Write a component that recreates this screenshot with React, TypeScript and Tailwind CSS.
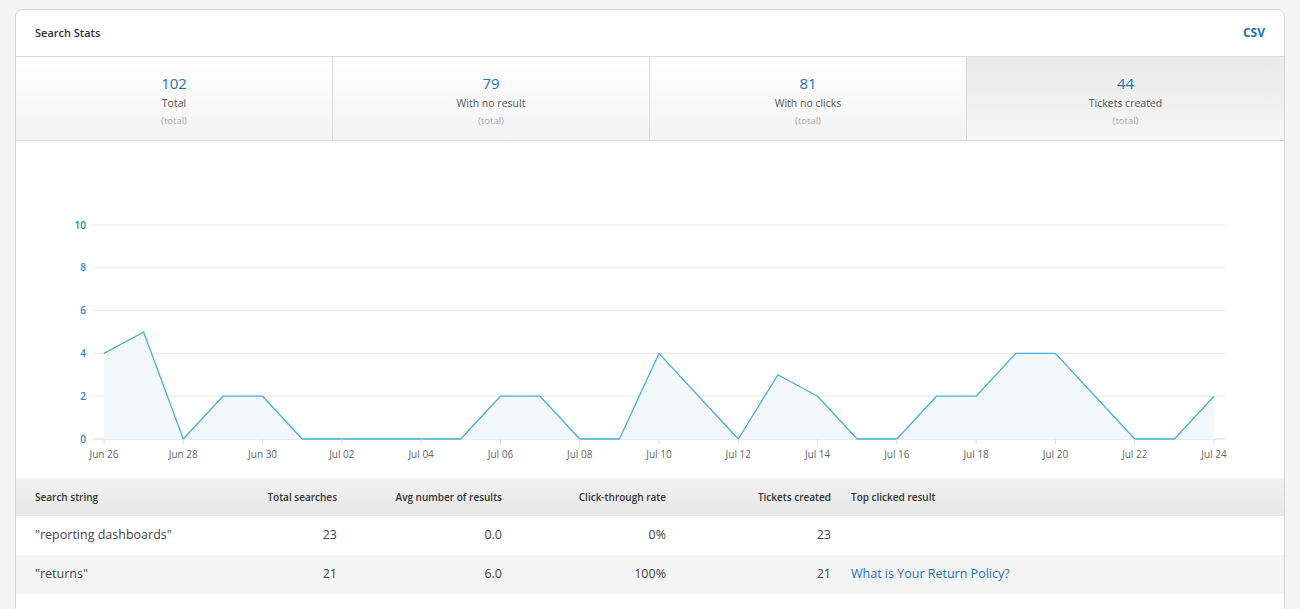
import React from 'react';

const STATS = [
  { value: '102', label: 'Total' },
  { value: '79', label: 'With no result' },
  { value: '81', label: 'With no clicks' },
  { value: '44', label: 'Tickets created', active: true },
];

// tickets per day, Jun 26 .. Jul 24
const DATA = [4, 5, 0, 2, 2, 0, 0, 0, 0, 0, 2, 2, 0, 0, 4, 2, 0, 3, 2, 0, 0, 2, 2, 4, 4, 2, 0, 0, 2];
const X_LABELS = ['Jun 26', 'Jun 28', 'Jun 30', 'Jul 02', 'Jul 04', 'Jul 06', 'Jul 08', 'Jul 10', 'Jul 12', 'Jul 14', 'Jul 16', 'Jul 18', 'Jul 20', 'Jul 22', 'Jul 24'];

const ROWS = [
  { q: '"reporting dashboards"', total: '23', avg: '0.0', ctr: '0%', tickets: '23', top: '' },
  { q: '"returns"', total: '21', avg: '6.0', ctr: '100%', tickets: '21', top: 'What is Your Return Policy?' },
];

const X0 = 104;
const X1 = 1214;
const Y0 = 439;
const UNIT = 21.4;
const px = (i: number) => X0 + ((X1 - X0) / (DATA.length - 1)) * i;
const py = (v: number) => Y0 - v * UNIT;

const Chart: React.FC = () => {
  const line = DATA.map((v, i) => `${i === 0 ? 'M' : 'L'}${px(i).toFixed(1)},${py(v).toFixed(1)}`).join(' ');
  const area = `${line} L${X1},${Y0} L${X0},${Y0} Z`;
  return (
    <svg viewBox="16 141 1268 337" className="block w-full h-[337px]" style={{ fontFamily: '"Open Sans", sans-serif' }}>
      {[0, 2, 4, 6, 8, 10].map((t) => (
        <g key={t}>
          <line x1={94} x2={1225} y1={py(t)} y2={py(t)} stroke={t === 0 ? '#e2e4e6' : '#e6e6e6'} strokeWidth={t === 0 ? 1.5 : 1} />
          <text x={86} y={py(t) + 3.5} textAnchor="end" fontSize={10} fill="#2b86c5" fontWeight={600}>{t}</text>
        </g>
      ))}
      <path d={area} fill="#f3f8fd" />
      <path d={line} fill="none" stroke="#4aaee3" strokeWidth={1.3} strokeLinejoin="round" />
      {X_LABELS.map((l, k) => (
        <g key={l}>
          <line x1={px(k * 2)} x2={px(k * 2)} y1={Y0} y2={Y0 + 5} stroke="#dcdcdc" />
          <text x={px(k * 2)} y={458} textAnchor="middle" fontSize={10} fill="#666">{l}</text>
        </g>
      ))}
    </svg>
  );
};

const COLS = 'grid grid-cols-[156px_165px_165px_164px_165px_1fr]';

export default function App() {
  return (
    <div className="min-h-[609px] bg-[#f4f4f4] pt-[9px] px-[15px] overflow-hidden" style={{ fontFamily: '"Open Sans", "Liberation Sans", sans-serif' }}>
      <div className="bg-white border border-[#d6d6d6] rounded-t-[8px] w-[1270px]">
        <div className="h-[47px] flex items-center justify-between px-[19px] border-b border-[#dcdcdc]">
          <span className="text-[11px] font-semibold text-[#333]">Search Stats</span>
          <span className="text-[12px] font-bold text-[#1f73b7]">CSV</span>
        </div>
        <div className="grid grid-cols-4 border-b border-[#dcdcdc]">
          {STATS.map((s, i) => (
            <div
              key={s.label}
              className={`h-[83px] flex flex-col items-center pt-[16px] ${i < 3 ? 'border-r border-[#dcdcdc]' : ''} ${s.active ? 'bg-gradient-to-b from-[#e9e9e9] to-[#f6f6f6]' : 'bg-gradient-to-b from-white to-[#f3f3f3]'}`}
            >
              <span className="text-[15px] leading-[20px] text-[#1f73b7]">{s.value}</span>
              <span className="text-[10.5px] leading-[16px] mt-[2px] text-[#555]">{s.label}</span>
              <span className="text-[9.5px] leading-[14px] mt-[3px] text-[#aaa]">(total)</span>
            </div>
          ))}
        </div>
        <Chart />
        <div className={`${COLS} text-[10px] font-semibold text-[#333] h-[38px] items-center bg-gradient-to-b from-[#f1f1f1] to-[#e7e7e7]`}>
          <div className="pl-[19px]">Search string</div>
          <div className="text-right">Total searches</div>
          <div className="text-right">Avg number of results</div>
          <div className="text-right">Click-through rate</div>
          <div className="text-right">Tickets created</div>
          <div className="pl-[20px]">Top clicked result</div>
        </div>
        {ROWS.map((r, i) => (
          <div
            key={r.q}
            className={`${COLS} text-[12.5px] text-[#444] items-center h-[39px] ${i % 2 ? 'bg-[#f4f4f4]' : 'bg-white'}`}
          >
            <div className="pl-[19px] whitespace-nowrap">{r.q}</div>
            <div className="text-right">{r.total}</div>
            <div className="text-right">{r.avg}</div>
            <div className="text-right">{r.ctr}</div>
            <div className="text-right">{r.tickets}</div>
            <div className="pl-[20px] text-[#1f73b7]">{r.top}</div>
          </div>
        ))}
        <div className="h-[20px]" />
      </div>
    </div>
  );
}
